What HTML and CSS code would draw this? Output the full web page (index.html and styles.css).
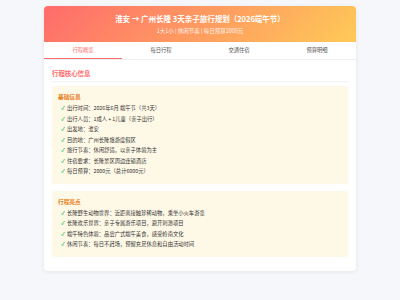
FILE: index.html
```html
<!DOCTYPE html>
<html lang="zh-CN">
<head>
  <meta charset="UTF-8" />
  <meta name="viewport" content="width=device-width, initial-scale=1.0" />
  <title>淮安 → 广州长隆 3天亲子旅行规划</title>
  <link rel="stylesheet" href="styles.css">
</head>
<body>
  <div class="container">
    <div class="header">
      <h1>淮安 → 广州长隆 3天亲子旅行规划（2026端午节）</h1>
      <div class="subhead">1大1小 | 休闲节奏 | 每日预算2000元</div>
    </div>

    <div class="tabs">
      <div class="tab active">行程概览</div>
      <div class="tab">每日行程</div>
      <div class="tab">交通住宿</div>
      <div class="tab">预算明细</div>
    </div>

    <div class="content">
      <h2 class="section-title">行程核心信息</h2>

      <div class="info-box">
        <h3>基础信息</h3>
        <ul>
          <li>出行时间：2026年6月 端午节（共3天）</li>
          <li>出行人员：1成人 + 1儿童（亲子出行）</li>
          <li>出发地：淮安</li>
          <li>目的地：广州长隆旅游度假区</li>
          <li>旅行节奏：休闲舒适，以亲子体验为主</li>
          <li>住宿要求：长隆景区周边连锁酒店</li>
          <li>每日预算：2000元（总计6000元）</li>
        </ul>
      </div>

      <div class="info-box">
        <h3>行程亮点</h3>
        <ul>
          <li>长隆野生动物世界：近距离接触珍稀动物，乘坐小火车游览</li>
          <li>长隆欢乐世界：亲子专属游乐项目，避开刺激项目</li>
          <li>端午特色体验：品尝广式端午美食，感受岭南文化</li>
          <li>休闲节奏：每日不赶场，预留充足休息和自由活动时间</li>
        </ul>
      </div>
    </div>
  </div>
</body>
</html>
```

FILE: styles.css
```css
body {
  font-family: "Noto Sans CJK SC", "Noto Sans", sans-serif;
  background: #f5f7fa;
  margin: 0;
  padding: 0;
  color: #333;
}
.container {
  width: 312px;
  margin: 6px auto;
  background: #ffffff;
  border-radius: 4px;
  overflow: hidden;
  box-shadow: 0 1px 4px rgba(0, 0, 0, 0.08);
}
.header {
  background: linear-gradient(135deg, #ff6b6b, #feca57);
  color: #fff;
  text-align: center;
  padding: 7px 8px 5px;
}
h1 {
  margin: 0;
  font-size: 7.5px;
  line-height: 12px;
  font-weight: 700;
}
.subhead {
  font-size: 5.5px;
  line-height: 11px;
  margin-top: 1px;
  opacity: 0.9;
}
.tabs {
  display: flex;
  border-bottom: 1px solid #f0f0f0;
}
.tab {
  flex: 1;
  text-align: center;
  font-size: 5.3px;
  color: #555;
  line-height: 16px;
  border-bottom: 1px solid transparent;
}
.tab.active {
  color: #ff6b6b;
  border-bottom-color: #ff6b6b;
}
.content {
  padding: 8px 8px 14px;
}
.section-title {
  margin: 0 0 4px;
  font-size: 6.4px;
  line-height: 11px;
  color: #ff6b6b;
  font-weight: 700;
  padding-bottom: 2px;
  border-bottom: 1px solid #f3f3f3;
}
.info-box {
  background: #fef8e6;
  border-radius: 3px;
  padding: 6px 6px 7px;
  margin-bottom: 7px;
}
.info-box:last-child {
  margin-bottom: 0;
}
h3 {
  margin: 0 0 2px;
  font-size: 5.7px;
  line-height: 9px;
  color: #e67e22;
  font-weight: 700;
}
ul {
  list-style: none;
  margin: 0;
  padding: 0 0 0 3px;
}
li {
  font-size: 5.3px;
  line-height: 10.5px;
  color: #333;
}
li::before {
  content: "✓";
  color: #2ecc71;
  font-weight: 700;
  display: inline-block;
  width: 6px;
}
```
